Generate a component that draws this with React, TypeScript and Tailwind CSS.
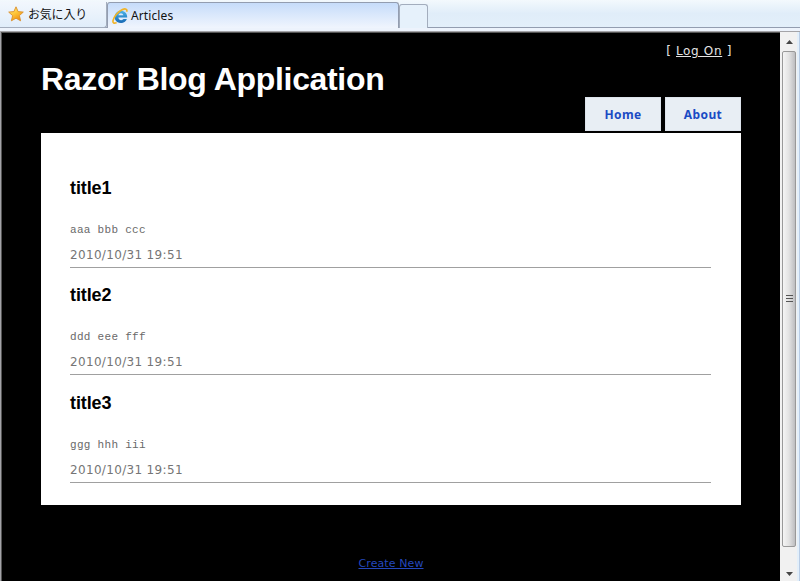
import React from "react";

const articles = [
  { title: "title1", body: "aaa bbb ccc", date: "2010/10/31 19:51" },
  { title: "title2", body: "ddd eee fff", date: "2010/10/31 19:51" },
  { title: "title3", body: "ggg hhh iii", date: "2010/10/31 19:51" },
];

function StarIcon() {
  return (
    <svg width="16" height="16" viewBox="0 0 16 16">
      <defs>
        <linearGradient id="star" x1="0" y1="0" x2="0.6" y2="1">
          <stop offset="0" stopColor="#fff0a0" />
          <stop offset="0.5" stopColor="#ffc93c" />
          <stop offset="1" stopColor="#f09010" />
        </linearGradient>
      </defs>
      <path
        d="M8 0.8 L10.1 5.6 L15.3 6.1 L11.4 9.6 L12.6 14.8 L8 12.2 L3.4 14.8 L4.6 9.6 L0.7 6.1 L5.9 5.6 Z"
        fill="url(#star)"
        stroke="#d98e2b"
        strokeWidth="0.9"
        strokeLinejoin="round"
      />
    </svg>
  );
}

function BrowserIcon() {
  return (
    <svg width="16" height="16" viewBox="0 0 16 16">
      <defs>
        <linearGradient id="globe" x1="0" y1="0" x2="0" y2="1">
          <stop offset="0" stopColor="#4bb4e8" />
          <stop offset="1" stopColor="#1668b4" />
        </linearGradient>
      </defs>
      <path
        d="M15.2 9.4 H6.4 C6.6 12.6 10.4 12.8 11.4 11 H14.9 C13.4 15.2 8.6 16.1 5.2 13.9 C1.8 11.6 1.9 6.6 4.8 4.2 C8.8 1 15.4 3 15.2 9.4 Z M6.4 7.3 H11.4 C11 4.6 6.9 4.6 6.4 7.3 Z"
        fill="url(#globe)"
        fillRule="evenodd"
      />
      <path
        d="M14.6 3.8 C15.6 1 13.4 0.3 10.4 1.6 C5.4 4 1.6 9.4 1 12.6 C0.6 15 2.2 15.8 4.6 14.4"
        fill="none"
        stroke="#f0b429"
        strokeWidth="1.7"
      />
    </svg>
  );
}

function TabStrip() {
  return (
    <div className="flex h-[28px] shrink-0 border-b border-[#939db0] bg-gradient-to-b from-[#f3f9fd] via-[#e0edf9] to-[#e3effa]">
      <div className="mt-[2px] flex h-[26px] w-[107px] rounded-br-[3px] border-b border-r border-[#a3adbd] bg-gradient-to-b from-[#f2f7fd] to-[#e0edfa] pl-[8px] pt-[4px]">
        <StarIcon />
        <span className="ml-[4px] whitespace-nowrap font-['Noto_Sans_CJK_JP',sans-serif] text-[12px] leading-[16px] tracking-[-0.2px] text-[#111]">
          お気に入り
        </span>
      </div>
      <div className="mt-[2px] flex h-[26px] w-[292px] rounded-t-[3px] border border-b-0 border-[#939db0] bg-gradient-to-b from-[#c6dcfa] to-[#f0f5fd] pl-[4px] pt-[5px]">
        <BrowserIcon />
        <span className="ml-[3px] font-['Noto_Sans',sans-serif] text-[12px] leading-[16px] tracking-[0.1px] text-[#111]">
          Articles
        </span>
      </div>
      <div className="mt-[4px] h-[24px] w-[29px] rounded-t-[3px] border border-b-0 border-[#a3adbd] bg-[#e6f1fb]" />
    </div>
  );
}

function Scrollbar() {
  return (
    <div className="flex w-[17px] shrink-0 flex-col items-center bg-[#f1f1f1] pl-px">
      <div className="flex h-[19px] items-center pt-px">
        <svg width="7" height="4" viewBox="0 0 7 4">
          <path d="M0 4 L3.5 0 L7 4 Z" fill="#454545" />
        </svg>
      </div>
      <div className="flex h-[496px] w-[14px] flex-col items-center justify-center gap-[2px] rounded-[2px] border border-[#999] bg-gradient-to-r from-[#f5f5f5] via-[#e2e2e2] to-[#bdbdc0] pb-[2px]">
        <div className="h-px w-[7px] bg-[#555]" />
        <div className="h-px w-[7px] bg-[#555]" />
        <div className="h-px w-[7px] bg-[#555]" />
      </div>
      <div className="flex h-[33px] items-center pt-[21px]">
        <svg width="7" height="4" viewBox="0 0 7 4">
          <path d="M0 0 L3.5 4 L7 0 Z" fill="#454545" />
        </svg>
      </div>
    </div>
  );
}

export default function App() {
  return (
    <div className="flex h-[581px] w-[800px] flex-col overflow-hidden bg-[#e3effa]">
      <TabStrip />
      <div className="h-[3px] shrink-0 bg-[#edf3fc]" />
      <div className="h-px shrink-0 bg-[#a4a4a8]" />
      <div className="flex min-h-0 flex-1">
        <div className="w-px bg-[#a4a4a8]" />
        <main className="flex w-[779px] shrink-0 flex-col border-l border-t border-[#555] bg-black pl-[39px] pr-[39px]">
          <div className="flex h-[31px] justify-end whitespace-pre pr-[9px] pt-[10px] font-['DejaVu_Sans',sans-serif] text-[12px] leading-[16px] tracking-[0.65px] text-[#e4e4e4]">
            {"[ "}
            <a className="underline">Log On</a>
            {" ]"}
          </div>
          <h1 className="h-[33px] whitespace-nowrap font-['Liberation_Sans',sans-serif] text-[32px] font-bold leading-[30px] tracking-[-0.34px] text-white">
            Razor Blog Application
          </h1>
          <nav className="flex h-[36px] justify-end gap-[4px] font-['Noto_Sans',sans-serif] text-[12px] font-bold leading-[34px] tracking-[0.4px] text-[#1a4bc4]">
            <a className="h-[34px] w-[76px] border border-[#dde4ec] bg-[#e8eef4] text-center">
              Home
            </a>
            <a className="h-[34px] w-[76px] border border-[#dde4ec] bg-[#e8eef4] text-center">
              About
            </a>
          </nav>
          <section className="h-[372px] w-[700px] shrink-0 bg-white px-[29px] pt-[46px]">
            {articles.map((a) => (
              <article
                key={a.title}
                className="flex h-[107.3px] w-[641px] flex-col"
              >
                <h2 className="h-[41px] font-['Liberation_Sans',sans-serif] text-[18px] font-bold leading-[19px] tracking-[-0.1px] text-black">
                  {a.title}
                </h2>
                <p className="h-[26px] font-['Liberation_Mono',monospace] text-[11px] leading-[20px] tracking-[0.3px] text-[#696969]">
                  {a.body}
                </p>
                <p className="h-[22px] border-b border-[#a0a0a0] font-['DejaVu_Sans',sans-serif] text-[12px] leading-[19px] tracking-[0.33px] text-[#757575]">
                  {a.date}
                </p>
              </article>
            ))}
          </section>
          <div className="pt-[51px] text-center font-['DejaVu_Sans',sans-serif] text-[11px] leading-[16px] tracking-[0.1px] text-[#2447bd]">
            <a className="underline">Create New</a>
          </div>
        </main>
        <Scrollbar />
        <div className="w-[3px] border-r border-[#b9cde6] bg-[#e3effa]" />
      </div>
    </div>
  );
}
